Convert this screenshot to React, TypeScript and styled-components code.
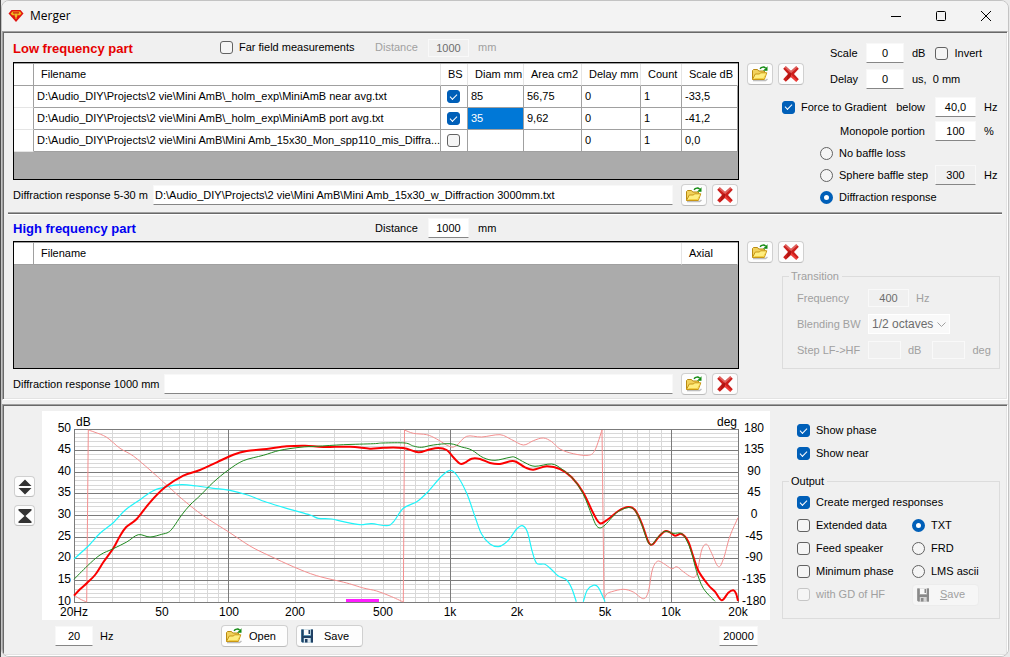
import React from "react";
import styled, { createGlobalStyle, css } from "styled-components";

const GlobalStyle = createGlobalStyle`
  *, *::before, *::after { box-sizing: border-box; }
  body {
    margin: 0;
    background: #e9e9e9;
    color: #000;
    font: 11px/13px "Liberation Sans", Arial, sans-serif;
  }
  input, button, select { font: inherit; color: inherit; margin: 0; }
`;

/* ---------- window frame ---------- */

const Desktop = styled.div`
  min-height: 100vh;
  padding: 0 1px 1px 0;
  border-left: 1px solid #4c4c4c;
`;

const Window = styled.main`
  display: flex;
  flex-direction: column;
  gap: 4px;
  min-height: calc(100vh - 1px);
  background: #f0f0f0;
  border: 1px solid #c3c3c3;
  border-radius: 8px;
  overflow: hidden;
`;

const TitleBar = styled.header`
  display: flex;
  align-items: center;
  height: 30px;
  margin-bottom: -4px;
  padding-left: 6px;
  background: #f3f3f3;
`;

const Title = styled.h1`
  flex: 1;
  margin: 0 0 0 6px;
  font: 400 12px/16px "Open Sans", "Noto Sans", sans-serif;
`;

const CaptionButton = styled.button`
  display: grid;
  place-items: center;
  width: 45px;
  height: 30px;
  padding: 0;
  border: 0;
  background: none;
`;

const Panel = styled.section`
  border: 1px solid;
  border-color: #a0a0a0 #fff #fff #a0a0a0;
  box-shadow: inset 1px 1px #696969, inset -1px -1px #e3e3e3;
`;

const MeasurementPanel = styled(Panel)`
  padding: 1px;
`;

const ChartPanel = styled(Panel)`
  display: grid;
  flex: 1;
  grid-template-columns: 38px minmax(0, 1fr) 230px;
  padding: 6px 7px 1px 1px;
`;

const Divider = styled.hr`
  height: 3px;
  margin: 0 4px;
  border: 0;
  background: linear-gradient(#a0a0a0 1px, #696969 1px 2px, #fff 2px);
`;

/* ---------- generic controls ---------- */

const disabledText = "#a0a0a0";

const TextBox = styled.input<{ $width?: number; $align?: string }>`
  width: ${(p) => (p.$width ? `${p.$width}px` : "100%")};
  height: 20px;
  padding: 0 1px;
  border: 1px solid #f8f8f8;
  border-bottom-color: #868686;
  background: #fff;
  text-align: ${(p) => p.$align ?? "center"};
  &:read-only { background: #f0f0f0; }
  &:disabled {
    height: 18px;
    border-color: #f9f9f9;
    background: #f0f0f0;
    color: #6d6d6d;
  }
`;

const Check = styled.input.attrs({ type: "checkbox" })`
  appearance: none;
  display: grid;
  place-content: center;
  flex: none;
  width: 13px;
  height: 13px;
  border: 1px solid #626262;
  border-radius: 3px;
  background: #f5f5f5;
  &:checked {
    border-color: #005fb8;
    background: #005fb8;
  }
  &:checked::after {
    content: "";
    width: 7px;
    height: 4px;
    margin-bottom: 2px;
    border: solid #fff;
    border-width: 0 0 1px 1px;
    transform: rotate(-45deg);
  }
  &:disabled { border-color: #c6c6c6; }
`;

const Radio = styled.input.attrs({ type: "radio" })`
  appearance: none;
  flex: none;
  width: 13px;
  height: 13px;
  border: 1px solid #626262;
  border-radius: 50%;
  background: #f5f5f5;
  &:checked {
    border: 4px solid #005fb8;
    background: #fff;
  }
`;

const Choice = styled.label<{ $muted?: boolean }>`
  display: flex;
  align-items: center;
  gap: 6px;
  white-space: nowrap;
  ${(p) => p.$muted && css`color: ${disabledText};`}
`;

const Caption = styled.label<{ $muted?: boolean }>`
  white-space: nowrap;
  ${(p) => p.$muted && css`color: ${disabledText};`}
`;

const Unit = styled.span<{ $muted?: boolean }>`
  white-space: nowrap;
  ${(p) => p.$muted && css`color: ${disabledText};`}
`;

const PushButton = styled.button`
  display: flex;
  align-items: center;
  justify-content: center;
  flex: none;
  width: 26px;
  height: 22px;
  padding: 0;
  border: 1px solid #d0d0d0;
  border-bottom-color: #bcbcbc;
  border-radius: 4px;
  background: #fdfdfd;
`;

const SquareButton = styled(PushButton)`
  width: 21px;
  height: 21px;
`;

const TextButton = styled(PushButton)`
  width: 67px;
  justify-content: flex-start;
  padding-left: 2px;
  span { flex: 1; padding-right: 6px; text-align: center; }
  &:disabled {
    border-color: #ececec;
    background: #f6f6f6;
    color: ${disabledText};
  }
`;

const ButtonPair = styled.div`
  display: flex;
  gap: 5px;
`;

const Group = styled.fieldset`
  min-width: 0;
  margin: 0;
  padding: 0 8px 0 14px;
  border: 1px solid #dcdcdc;
`;

const GroupTitle = styled.legend<{ $muted?: boolean }>`
  margin-left: -8px;
  padding: 0 3px 0 2px;
  ${(p) => p.$muted && css`color: ${disabledText};`}
`;

/* ---------- low / high frequency sections ---------- */

const Part = styled.div`
  display: grid;
  grid-template-columns: minmax(0, 1fr) 256px;
  gap: 8px;
  padding: 0 3px 0 9px;
`;

const LowPart = styled(Part)`
  padding-bottom: 5px;
`;

const HighPart = styled(Part)`
  padding-bottom: 3px;
`;

const PartHeader = styled.div<{ $height: number }>`
  display: grid;
  grid-template-columns: 207px 155px 53px 50px auto;
  align-items: center;
  height: ${(p) => p.$height}px;
`;

const PartTitle = styled.h2<{ $color: string }>`
  margin: 0;
  padding-top: 2px;
  color: ${(p) => p.$color};
  font-size: 13px;
  line-height: 16px;
`;

const GridFrame = styled.div<{ $height: number }>`
  height: ${(p) => p.$height}px;
  overflow: hidden;
  border: 1px solid #000;
  background: #ababab;
`;

const DataTable = styled.table`
  width: 100%;
  table-layout: fixed;
  border-collapse: separate;
  border-spacing: 0;
  border-top: 1px solid #a0a0a0;
`;

const Col = styled.col<{ $width?: number }>`
  ${(p) => p.$width && css`width: ${p.$width}px;`}
`;

const HeadCell = styled.th`
  height: 22px;
  padding: 0 0 0 7px;
  border-right: 1px solid #e5e5e5;
  border-bottom: 1px solid #a0a0a0;
  background: #fff;
  font-weight: 400;
  text-align: left;
  white-space: nowrap;
`;

const CornerCell = styled.td`
  border-right: 1px solid #a0a0a0;
  border-bottom: 1px solid #a0a0a0;
  background: #fff;
`;

const RowHead = styled.td`
  border-right: 1px solid #a0a0a0;
  border-bottom: 1px solid #e5e5e5;
  background: #fff;
`;

const Cell = styled.td<{ $selected?: boolean }>`
  height: 22px;
  padding: 0 0 0 3px;
  border-right: 1px solid #a0a0a0;
  border-bottom: 1px solid #a0a0a0;
  background: ${(p) => (p.$selected ? "#0078d7" : "#fff")};
  color: ${(p) => (p.$selected ? "#fff" : "#000")};
  white-space: nowrap;
  overflow: hidden;
`;

const CheckCell = styled(Cell)`
  padding: 0 6px;
`;

const FileRow = styled.div`
  display: flex;
  align-items: center;
  margin-top: 4px;
  padding-right: 1px;
  ${ButtonPair} { margin-left: 8px; }
`;

const FileLabel = styled(Caption)<{ $width: number }>`
  flex: none;
  width: ${(p) => p.$width}px;
`;

const LowSide = styled.div`
  padding-top: 10px;
`;

const LowSideTop = styled.div`
  display: flex;
  ${ButtonPair} { padding-top: 20px; align-items: flex-start; }
`;

const LevelGrid = styled.div`
  display: grid;
  grid-template-columns: 36px 46px auto;
  gap: 6px 0;
  align-items: center;
  margin-left: 26px;
`;

const UnitRow = styled.div`
  display: flex;
  align-items: center;
  gap: 10px;
`;

const FieldRow = styled.div`
  display: grid;
  grid-template-columns: minmax(0, 1fr) 41px 19px;
  column-gap: 8px;
  align-items: center;
  min-height: 20px;
`;

const FieldLead = styled.div<{ $end?: boolean }>`
  display: flex;
  justify-content: ${(p) => (p.$end ? "flex-end" : "space-between")};
  padding-right: 2px;
`;

const GradientFields = styled.div`
  display: grid;
  gap: 4px;
  margin: 8px 0 2px 35px;
`;

const BaffleFields = styled.div`
  display: grid;
  gap: 2px;
  margin-left: 73px;
`;

const HighSide = styled.div`
  padding-top: 26px;
`;

const TransitionGroup = styled(Group)`
  display: grid;
  row-gap: 6px;
  margin: 7px 3px 0 35px;
  padding-top: 5px;
  padding-bottom: 8px;
`;

const TransitionRow = styled.div`
  display: flex;
  align-items: center;
  height: 20px;
  ${Caption} { width: 71px; }
  ${Unit} { margin: 0 11px 0 7px; }
`;

const SelectWrap = styled.div`
  display: flex;
  align-items: center;
  width: 82px;
  height: 20px;
  border: 1px solid #fff;
  background: #f9f9f9;
  svg { margin-left: -12px; pointer-events: none; }
`;

const Select = styled.select`
  appearance: none;
  width: 80px;
  height: 18px;
  padding: 0 0 0 3px;
  border: 0;
  background: none;
  font-size: 12px;
  &:disabled { color: #6d6d6d; opacity: 1; }
`;

/* ---------- chart area ---------- */

const ZoomButtons = styled.div`
  display: grid;
  align-content: start;
  gap: 8px;
  padding: 65px 0 0 10px;
`;

const Plot = styled.svg`
  display: block;
  width: 100%;
  height: auto;
  background: #fff;
  font-size: 12px;
`;

const ChartFooter = styled.div`
  display: grid;
  grid-template-columns: 45px 121px 75px 67px 1fr;
  align-items: center;
  margin: 5px 12px 7px 13px;
  > :last-child { justify-self: end; }
`;

const OutputSide = styled.div`
  padding: 8px 0 0 12px;
`;

const ViewOptions = styled.div`
  display: grid;
  grid-auto-rows: 23px;
  margin-bottom: 10px;
  padding-left: 15px;
`;

const OutputGroup = styled(Group)`
  padding-top: 3px;
  padding-bottom: 12px;
`;

const OutputGrid = styled.div`
  display: grid;
  grid-template-columns: 115px 1fr;
  grid-auto-rows: 23px;
  align-items: center;
  > :first-child { grid-column: 1 / -1; }
`;

/* ---------- icons ---------- */

const LogoIcon = () => (
  <svg width="16" height="14" viewBox="0 0 16 14" aria-hidden="true">
    <path d="M3.500 1h9L15.500 4.500 8 13 .5 4.500z" fill="#e01410" />
    <path d="M4.500 2.600h7.500L13.500 4.400 11.800 6.300H9.500L8.800 9.200 8 10 7.200 9.200 6.500 6.300H4.200L2.600 4.400z" fill="#f0b81c" />
    <path d="M5 3.200h6v1.300H9.200V8L8 9 6.800 8V4.500H5z" fill="#d01a0e" />
    <path d="M7.200 4.500h1.600V8L8 8.800 7.200 8z" fill="#f7dd3a" />
  </svg>
);

const FolderIcon = () => (
  <svg width="20" height="18" viewBox="0 0 20 18" aria-hidden="true">
    <path d="M3 15.500h12.500l2-1.500" stroke="#bdbdbd" strokeWidth="1.500" fill="none" />
    <path d="M2.500 14.500V5.500l1-1h4l1.200 1.500h5.300l1 1V9" fill="#f2d25c" stroke="#b98a12" />
    <path d="M2.500 14.500 5.300 9h4.200l1-1.200h6.300l-2.500 6.700z" fill="#ffee80" stroke="#c99716" strokeLinejoin="round" />
    <path d="M4.500 13.500h9.200l1.300-3" stroke="#f2cf45" fill="none" />
    <path d="M10 3.700C11.500 1.800 14 1.500 15.600 3" stroke="#128a12" strokeWidth="1.400" fill="none" />
    <path d="M17.500 1.200v4.500H13z" fill="#128a12" />
  </svg>
);

const DeleteIcon = () => (
  <svg width="18" height="18" viewBox="0 0 18 18" aria-hidden="true">
    <path d="M3.800 1.300 9 6l5.200-4.700 2.600 2.500L12 9l4.800 5.200-2.600 2.500L9 12l-5.200 4.700-2.600-2.500L6 9 1.200 3.800z" fill="#cc1f1c" />
    <path d="M3.800 1.300 9 6l5.200-4.700 1.300 1.300L9 8.200 2.500 2.600z" fill="#e0605c" />
    <path d="M9 9.500 15.500 15.500l-1.300 1.200L9 12z" fill="#f03c38" />
    <path d="M6 9l3-1.500v3l-4.500 5z" fill="#b01512" />
  </svg>
);

const DiskIcon = ({ muted }: { muted?: boolean }) => {
  const body = muted ? "#8a8a8a" : "#1f3f63";
  const edge = muted ? "#a9a9a9" : "#5f9ab8";
  return (
    <svg width="18" height="16" viewBox="0 0 18 16" aria-hidden="true">
      <path d="M2 1.500h12V14.500H3l-1-1z" fill={edge} />
      <path d="M2.500 1.500h2V8h7.500V1.500h2V14.500h-2V10H4.500v4.500H3.500l-1-1z" fill={body} />
      <path d="M5 1.500h6.500V7H5z" fill="#fafafa" />
      <path d="M9.500 2h1.500v4h-1.500z" fill={body} />
      <path d="M5 10h6.500v4.500H5z" fill={muted ? "#d5d5d5" : "#dce6ee"} />
      <path d="M6 11h2.500v3.500H6z" fill={body} />
    </svg>
  );
};

const ExpandIcon = () => (
  <svg width="14" height="16" viewBox="0 0 14 16" aria-hidden="true" fill="#333">
    <path d="M7 .5 13.500 7H.5zM.5 9h13L7 15.500z" />
  </svg>
);

const CollapseIcon = () => (
  <svg width="14" height="16" viewBox="0 0 14 16" aria-hidden="true" fill="#333">
    <path d="M.5 1h13v1.500L7.500 8l6 5.500V15H.5v-1.500l6-5.500-6-5.500z" />
  </svg>
);

const FilePair = ({ target }: { target: string }) => (
  <ButtonPair>
    <PushButton aria-label={`Open ${target}`}><FolderIcon /></PushButton>
    <PushButton aria-label={`Remove ${target}`}><DeleteIcon /></PushButton>
  </ButtonPair>
);

/* ---------- data ---------- */

type Point = [number, number];

const FOLDER = "D:\\Audio_DIY\\Projects\\2 vie\\Mini AmB\\";

const lowFiles = [
  { file: FOLDER + "_holm_exp\\MiniAmB near avg.txt", bs: true, cells: ["85", "56,75", "0", "1", "-33,5"] },
  { file: FOLDER + "_holm_exp\\MiniAmB port avg.txt", bs: true, cells: ["35", "9,62", "0", "1", "-41,2"] },
  { file: FOLDER + "Mini Amb_15x30_Mon_spp110_mis_Diffra...", bs: false, cells: ["", "", "0", "1", "0,0"] },
];

const merged: Point[] = [
  [32, 184.7], [38, 178.3], [45.3, 171.7], [53, 164], [61.3, 151.3], [71.3, 137.3], [77.3, 126.3], [84, 116.3],
  [94.7, 108], [108, 91.3], [123, 76.3], [141.3, 64.7], [158, 59], [174.7, 51.3], [191.3, 43.7], [204.7, 40],
  [224.7, 38], [244.7, 35.3], [263, 34.7], [281.3, 36], [308, 35.7], [328, 37.7], [341.3, 36.7], [361.3, 37],
  [376.3, 41.3], [386.3, 38.7], [396.3, 37], [404.7, 39], [411.3, 46.3], [418, 52.7], [423, 51.7], [429.7, 47.7],
  [438, 48], [448, 52], [458, 53], [468, 50.3], [474, 50.7], [483, 56.3], [491.3, 58.7], [504.7, 55.3],
  [518, 58], [529.7, 66.3], [541.3, 81.7], [551.3, 102.3], [558, 112.3], [566.3, 108], [576.3, 100], [586.3, 96],
  [593, 99], [599.7, 112.3], [606.3, 130.7], [610.7, 133.3], [616.3, 126.3], [623, 120.3], [628, 121.3],
  [633, 124.7], [639.7, 123], [646.3, 130.7], [651.3, 145.7], [656.3, 159.7], [666.3, 174], [673, 180.7],
  [679.7, 189.3], [686.3, 181.7], [691.3, 179.3], [694, 182.3], [696, 190],
];

const near: Point[] = [
  [32, 168.3], [45.3, 155], [58, 144], [71.3, 137.7], [84.7, 131], [96.3, 123.7], [108, 126], [119.7, 123.3],
  [126.3, 121.3], [131.3, 116.3], [139.7, 104], [148, 94], [158, 84.7], [171.3, 71.3], [186.3, 59], [201.3, 49.7],
  [221.3, 44.3], [238, 39.3], [258, 36.3], [274.7, 35.3], [301.3, 33.7], [331.3, 32.7], [341.3, 32], [363, 32],
  [371.3, 35], [379.7, 36.3], [391.3, 34], [408, 32.7], [419.7, 36], [429.7, 39], [441.3, 46.7], [453, 49.3],
  [468, 46.3], [473, 46.3], [483, 51.7], [493, 55.3], [509.7, 53], [519.7, 58], [531.3, 68], [541.3, 83.3],
  [549.7, 104], [554, 114], [558, 117], [563, 114], [569.7, 106.7], [576.3, 100.5], [586.3, 96.5], [593, 99.5],
  [599.2, 112.3], [605.8, 130.7], [610.2, 133.3], [616, 126], [623, 120.3], [631, 122.3], [639.7, 122.5],
  [645.3, 130.7], [649.7, 142.3], [654.7, 160.7], [661.3, 177.3], [673, 190.3],
];

const port: Point[] = [
  [32, 148], [46.3, 135], [58, 122.3], [71.3, 111.7], [83, 99.3], [98, 88.7], [111.3, 79.7], [124.7, 75.7],
  [139.7, 73.7], [154.7, 75], [171.3, 77.3], [188, 79.3], [204.7, 83.7], [224.7, 91.3], [248, 98.3], [268, 104],
  [276.3, 107.3], [289.7, 108], [301.3, 110.7], [318, 113.7], [329.7, 112.7], [344.7, 114.7], [351.3, 111],
  [361.3, 97.3], [374.7, 90.7], [384.7, 82], [399.7, 65], [408, 59.3], [414.7, 64], [424.7, 82.3], [433, 105.7],
  [439.7, 123.3], [448, 133], [456.3, 135.7], [463, 132.3], [468, 127.3], [474.7, 118], [480.3, 114.7],
  [485.3, 120.7], [490.3, 140.7], [494.7, 152.3], [503, 153.3], [509.7, 158.7], [516.3, 165], [524.7, 169],
  [529.7, 177.3], [534.3, 190.7],
];

const portTail: Point[] = [[541.3, 190.7], [545.3, 179], [551.3, 174.3], [556.3, 176.3], [563, 190.7]];

/* The phase trace wraps at ±180°, so it is kept as separate runs. */
const phaseRuns: Point[][] = [
  [[32, 184], [38, 188], [44.7, 191]],
  [
    [46.3, 19], [53, 21.3], [64.7, 26.3], [78, 37.3], [91.3, 45], [108, 59], [124.7, 74], [141.3, 89],
    [161.3, 104.7], [186.3, 120.7], [208, 135], [228, 145], [251.3, 155.7], [274.7, 164.7], [304.7, 172],
    [321.3, 177], [334.7, 180], [348, 185], [361.3, 191],
  ],
  [
    [362.5, 19], [371.3, 22.3], [384.7, 23.7], [394.7, 28], [408, 35.7], [414.7, 34.3], [424.7, 25.3],
    [439.7, 26], [458, 23.7], [469.7, 28.7], [481.3, 34], [491.3, 29.7], [501.3, 27], [509.7, 30.7], [518, 38],
    [531.3, 42.7], [546.3, 44.3], [553, 39], [560, 19],
  ],
  [
    [562, 188], [564.7, 183], [569.7, 180.7], [581.3, 178.3], [591.3, 181], [601.3, 187.7], [606.3, 180.7],
    [610.3, 159], [615.3, 150.3], [621.3, 152.3], [629.7, 157.7], [634.7, 155.7], [641.3, 160.7], [649.7, 166],
    [654.7, 163], [659.7, 139], [664.7, 133.3], [669.7, 142.3], [676.3, 155.7], [681.3, 148.3], [688, 125],
    [696, 106.7],
  ],
];

/* ---------- plot geometry ---------- */

const LEFT = 32;
const RIGHT = 696;
const TOP = 18;
const BOTTOM = 191;

const xOf = (hz: number) => LEFT + ((RIGHT - LEFT) / 3) * Math.log10(hz / 20);
const yOf = (db: number) => BOTTOM - ((db - 10) * (BOTTOM - TOP)) / 40;

/* Grid lines sit on the middle of a pixel so they stay one pixel thick. */
const gridX = (hz: number) => Math.floor(xOf(hz) + 0.01) + 0.5;
const gridY = (db: number) => Math.floor(yOf(db) + 0.01) + 0.5;

const smooth = (pts: Point[], start = "M") =>
  pts
    .map((p, i) => {
      if (i === 0) return `${start}${p[0]} ${p[1]}`;
      const a = pts[Math.max(i - 2, 0)];
      const b = pts[i - 1];
      const d = pts[Math.min(i + 1, pts.length - 1)];
      const c1 = [b[0] + (p[0] - a[0]) / 6, b[1] + (p[1] - a[1]) / 6];
      const c2 = [p[0] - (d[0] - b[0]) / 6, p[1] - (d[1] - b[1]) / 6];
      return `C${c1[0].toFixed(1)} ${c1[1].toFixed(1)} ${c2[0].toFixed(1)} ${c2[1].toFixed(1)} ${p[0]} ${p[1]}`;
    })
    .join("");

const phasePath = phaseRuns.map((run, i) => smooth(run, i ? "L" : "M")).join("");

const decades = [10, 100, 1000, 10000];
const freqLines = decades
  .flatMap((d) => [1, 2, 3, 4, 5, 6, 7, 8, 9].map((n) => n * d))
  .filter((f) => f > 20 && f < 20000);
const dbLines = Array.from({ length: 41 }, (_, i) => 10 + i);
const dbMajor = dbLines.filter((d) => d % 5 === 0);

const freqLabels: [number, string][] = [
  [20, "20Hz"], [50, "50"], [100, "100"], [200, "200"], [500, "500"],
  [1000, "1k"], [2000, "2k"], [5000, "5k"], [10000, "10k"], [20000, "20k"],
];

const isDecade = (f: number) => decades.includes(f);

const ResponsePlot = () => (
  <Plot viewBox="0 0 728 209" role="img" aria-label="Merged frequency response">
    <g shapeRendering="crispEdges" fill="none">
      <g stroke="#d8d8d8">
        {dbLines.filter((d) => d % 5).map((d) => (
          <path key={d} d={`M${LEFT} ${gridY(d)}H${RIGHT}`} />
        ))}
        {freqLines.filter((f) => !isDecade(f)).map((f) => (
          <path key={f} d={`M${gridX(f)} ${TOP}V${BOTTOM}`} />
        ))}
      </g>
      <g stroke="#7b7b7b">
        {dbMajor.map((d) => (
          <path key={d} d={`M${LEFT} ${gridY(d)}H${RIGHT + 1}`} />
        ))}
        {[20, 20000, ...freqLines.filter(isDecade)].map((f) => (
          <path key={f} d={`M${gridX(f)} ${TOP}V${BOTTOM}`} />
        ))}
      </g>
    </g>
    <rect x="304" y="188" width="33" height="3" fill="#ff1cff" />
    <g fill="none" strokeLinejoin="round">
      <path d={phasePath} stroke="#f48f8f" />
      <path d={smooth(port) + smooth(portTail)} stroke="#1ff4fa" strokeWidth="1.200" />
      <path d={smooth(merged)} stroke="#fb0000" strokeWidth="2" />
      <path d={smooth(near)} stroke="#1f8a1f" />
    </g>
    <g textAnchor="end">
      {dbMajor.map((d) => (
        <text key={d} x="29" y={Math.floor(yOf(d)) + 3}>{d}</text>
      ))}
    </g>
    <g textAnchor="middle">
      {dbMajor.map((d) => (
        <text key={d} x="712" y={Math.floor(yOf(d)) + 3}>{(d - 30) * 9}</text>
      ))}
      {freqLabels.map(([f, label]) => (
        <text key={label} x={Math.round(xOf(f))} y="205">{label}</text>
      ))}
    </g>
    <text x="34" y="15">dB</text>
    <text x="695" y="15" textAnchor="end">deg</text>
  </Plot>
);

/* ---------- page ---------- */

const LowFrequency = () => (
  <LowPart>
    <div>
      <PartHeader $height={29}>
        <PartTitle $color="#e60000">Low frequency part</PartTitle>
        <Choice><Check />Far field measurements</Choice>
        <Caption htmlFor="lf-distance" $muted>Distance</Caption>
        <TextBox id="lf-distance" $width={41} defaultValue="1000" disabled />
        <Unit $muted>mm</Unit>
      </PartHeader>
      <GridFrame $height={118}>
        <DataTable>
          <colgroup>
            <Col $width={20} /><Col /><Col $width={27} /><Col $width={56} /><Col $width={58} />
            <Col $width={59} /><Col $width={41} /><Col $width={56} />
          </colgroup>
          <thead>
            <tr>
              <CornerCell />
              {["Filename", "BS", "Diam mm", "Area cm2", "Delay mm", "Count", "Scale dB"].map((h) => (
                <HeadCell key={h} scope="col">{h}</HeadCell>
              ))}
            </tr>
          </thead>
          <tbody>
            {lowFiles.map((row, r) => (
              <tr key={row.file}>
                <RowHead />
                <Cell>{row.file}</Cell>
                <CheckCell><Check defaultChecked={row.bs} aria-label="BS" /></CheckCell>
                {row.cells.map((value, c) => (
                  <Cell key={c} $selected={r === 1 && c === 0}>{value}</Cell>
                ))}
              </tr>
            ))}
          </tbody>
        </DataTable>
      </GridFrame>
      <FileRow>
        <FileLabel htmlFor="lf-diffraction" $width={140}>Diffraction response 5-30 m</FileLabel>
        <TextBox id="lf-diffraction" $align="left" defaultValue={FOLDER + "Mini Amb_15x30_w_Diffraction 3000mm.txt"} />
        <FilePair target="low frequency diffraction response" />
      </FileRow>
    </div>
    <LowSide>
      <LowSideTop>
        <FilePair target="low frequency file" />
        <LevelGrid>
          <Caption htmlFor="scale">Scale</Caption>
          <TextBox id="scale" $width={38} defaultValue="0" />
          <UnitRow><Unit>dB</Unit><Choice><Check />Invert</Choice></UnitRow>
          <Caption htmlFor="delay">Delay</Caption>
          <TextBox id="delay" $width={38} defaultValue="0" />
          <UnitRow><Unit>us,&nbsp; 0 mm</Unit></UnitRow>
        </LevelGrid>
      </LowSideTop>
      <GradientFields>
        <FieldRow>
          <FieldLead>
            <Choice><Check defaultChecked />Force to Gradient</Choice>
            <Caption htmlFor="below">below</Caption>
          </FieldLead>
          <TextBox id="below" defaultValue="40,0" />
          <Unit>Hz</Unit>
        </FieldRow>
        <FieldRow>
          <FieldLead $end><Caption htmlFor="monopole">Monopole portion</Caption></FieldLead>
          <TextBox id="monopole" defaultValue="100" />
          <Unit>%</Unit>
        </FieldRow>
      </GradientFields>
      <BaffleFields>
        <FieldRow><Choice><Radio name="baffle" />No baffle loss</Choice></FieldRow>
        <FieldRow>
          <Choice><Radio name="baffle" />Sphere baffle step</Choice>
          <TextBox defaultValue="300" readOnly aria-label="Sphere baffle step frequency" />
          <Unit>Hz</Unit>
        </FieldRow>
        <FieldRow><Choice><Radio name="baffle" defaultChecked />Diffraction response</Choice></FieldRow>
      </BaffleFields>
    </LowSide>
  </LowPart>
);

const HighFrequency = () => (
  <HighPart>
    <div>
      <PartHeader $height={26}>
        <PartTitle $color="#0000f0">High frequency part</PartTitle>
        <span />
        <Caption htmlFor="hf-distance">Distance</Caption>
        <TextBox id="hf-distance" $width={41} defaultValue="1000" />
        <Unit>mm</Unit>
      </PartHeader>
      <GridFrame $height={128}>
        <DataTable>
          <colgroup><Col $width={20} /><Col /><Col $width={56} /></colgroup>
          <thead>
            <tr>
              <CornerCell />
              <HeadCell scope="col">Filename</HeadCell>
              <HeadCell scope="col">Axial</HeadCell>
            </tr>
          </thead>
        </DataTable>
      </GridFrame>
      <FileRow>
        <FileLabel htmlFor="hf-diffraction" $width={151}>Diffraction response 1000 mm</FileLabel>
        <TextBox id="hf-diffraction" $align="left" defaultValue="" />
        <FilePair target="high frequency diffraction response" />
      </FileRow>
    </div>
    <HighSide>
      <FilePair target="high frequency file" />
      <TransitionGroup>
        <GroupTitle $muted>Transition</GroupTitle>
        <TransitionRow>
          <Caption htmlFor="frequency" $muted>Frequency</Caption>
          <TextBox id="frequency" $width={41} defaultValue="400" disabled />
          <Unit $muted>Hz</Unit>
        </TransitionRow>
        <TransitionRow>
          <Caption htmlFor="blending" $muted>Blending BW</Caption>
          <SelectWrap>
            <Select id="blending" disabled><option>1/2 octaves</option></Select>
            <svg width="9" height="5" viewBox="0 0 9 5" aria-hidden="true">
              <path d="M.5 .5 4.500 4.500 8.500 .5" fill="none" stroke="#a0a0a0" />
            </svg>
          </SelectWrap>
        </TransitionRow>
        <TransitionRow>
          <Caption htmlFor="step-db" $muted>Step LF-&gt;HF</Caption>
          <TextBox id="step-db" $width={33} defaultValue="" disabled />
          <Unit $muted>dB</Unit>
          <TextBox $width={33} defaultValue="" disabled aria-label="Step phase" />
          <Unit $muted>deg</Unit>
        </TransitionRow>
      </TransitionGroup>
    </HighSide>
  </HighPart>
);

const Output = () => (
  <OutputSide>
    <ViewOptions>
      <Choice><Check defaultChecked />Show phase</Choice>
      <Choice><Check defaultChecked />Show near</Choice>
    </ViewOptions>
    <OutputGroup>
      <GroupTitle>Output</GroupTitle>
      <OutputGrid>
        <Choice><Check defaultChecked />Create merged responses</Choice>
        <Choice><Check />Extended data</Choice>
        <Choice><Radio name="format" defaultChecked />TXT</Choice>
        <Choice><Check />Feed speaker</Choice>
        <Choice><Radio name="format" />FRD</Choice>
        <Choice><Check />Minimum phase</Choice>
        <Choice><Radio name="format" />LMS ascii</Choice>
        <Choice $muted><Check disabled />with GD of HF</Choice>
        <TextButton disabled><DiskIcon muted /><span><u>S</u>ave</span></TextButton>
      </OutputGrid>
    </OutputGroup>
  </OutputSide>
);

export default function App() {
  return (
    <>
      <GlobalStyle />
      <Desktop>
        <Window>
          <TitleBar>
            <LogoIcon />
            <Title>Merger</Title>
            <CaptionButton aria-label="Minimize">
              <svg width="10" height="10" viewBox="0 0 10 10"><path d="M0 5.500h10" stroke="#000" /></svg>
            </CaptionButton>
            <CaptionButton aria-label="Maximize">
              <svg width="10" height="10" viewBox="0 0 10 10">
                <rect x=".5" y=".5" width="9" height="9" rx="1" fill="none" stroke="#000" />
              </svg>
            </CaptionButton>
            <CaptionButton aria-label="Close">
              <svg width="10" height="10" viewBox="0 0 10 10"><path d="M0 0 10 10M10 0 0 10" stroke="#000" /></svg>
            </CaptionButton>
          </TitleBar>
          <MeasurementPanel>
            <LowFrequency />
            <Divider />
            <HighFrequency />
          </MeasurementPanel>
          <ChartPanel>
            <ZoomButtons>
              <SquareButton aria-label="Expand scale"><ExpandIcon /></SquareButton>
              <SquareButton aria-label="Compress scale"><CollapseIcon /></SquareButton>
            </ZoomButtons>
            <div>
              <ResponsePlot />
              <ChartFooter>
                <TextBox id="min-frequency" $width={38} defaultValue="20" />
                <Caption htmlFor="min-frequency">Hz</Caption>
                <TextButton><FolderIcon /><span>Open</span></TextButton>
                <TextButton><DiskIcon /><span>Save</span></TextButton>
                <TextBox $width={39} defaultValue="20000" aria-label="Maximum frequency" />
              </ChartFooter>
            </div>
            <Output />
          </ChartPanel>
        </Window>
      </Desktop>
    </>
  );
}
